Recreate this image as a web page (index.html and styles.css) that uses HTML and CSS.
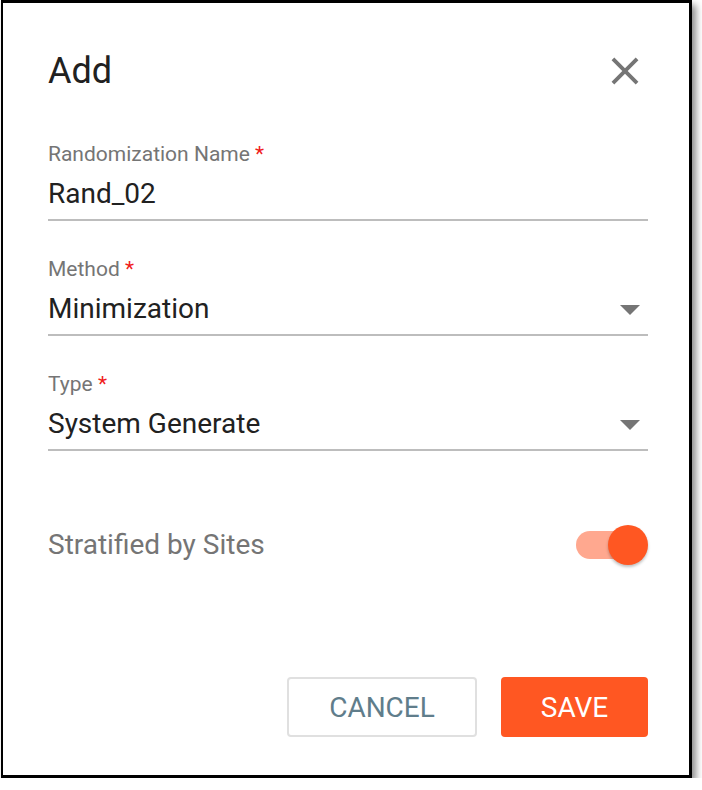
FILE: index.html
```html
<!DOCTYPE html>
<html lang="en">
<head>
<meta charset="utf-8">
<title>Add</title>
<link rel="stylesheet" href="styles.css">
</head>
<body>
<div class="dialog">
  <div class="header">
    <h1 class="title">Add</h1>
    <button class="close" aria-label="Close">
      <svg viewBox="0 0 24 24" width="46" height="46"><path fill="#757575" d="M19 6.41L17.59 5 12 10.59 6.41 5 5 6.41 10.59 12 5 17.59 6.41 19 12 13.41 17.59 19 19 17.59 13.41 12z"/></svg>
    </button>
  </div>

  <div class="field first">
    <div class="label">Randomization Name <span class="req">*</span></div>
    <div class="value">Rand_02</div>
  </div>

  <div class="field">
    <div class="label">Method <span class="req">*</span></div>
    <div class="value select">Minimization<span class="caret"></span></div>
  </div>

  <div class="field">
    <div class="label">Type <span class="req">*</span></div>
    <div class="value select">System Generate<span class="caret"></span></div>
  </div>

  <div class="toggle-row">
    <span class="toggle-label">Stratified by Sites</span>
    <span class="switch"><span class="track"></span><span class="thumb"></span></span>
  </div>

  <div class="actions">
    <button class="btn cancel">CANCEL</button>
    <button class="btn save">SAVE</button>
  </div>
</div>
</body>
</html>
```

FILE: styles.css
```css
html, body {
  margin: 0;
  padding: 0;
  background: #ffffff;
}

body {
  font-family: Roboto, "Liberation Sans", Arial, sans-serif;
  color: #212121;
}

.dialog {
  box-sizing: border-box;
  margin-left: 1px;
  width: 691px;
  height: 778px;
  border: 3px solid #000;
  border-left-width: 2px;
  background: #fff;
  box-shadow: 4px 5px 7px rgba(0, 0, 0, 0.45);
  padding: 47px 41px 38px 45px;
  display: flex;
  flex-direction: column;
}

.header {
  display: flex;
  align-items: center;
  justify-content: space-between;
  height: 42px;
}

.title {
  margin: 0;
  font-size: 36px;
  line-height: 42px;
  font-weight: 400;
  color: #212121;
}

.close {
  border: 0;
  background: none;
  padding: 0;
  width: 46px;
  height: 46px;
  display: flex;
}

.field {
  margin-top: 36px;
}

.field.first {
  margin-top: 50px;
}

.label {
  font-size: 21px;
  line-height: 24px;
  color: #757575;
}

.req {
  color: #f01c1c;
}

.value {
  position: relative;
  margin-top: 12px;
  font-size: 28px;
  line-height: 32px;
  padding-bottom: 9px;
  border-bottom: 2px solid #bdbdbd;
  color: #212121;
}

.caret {
  position: absolute;
  right: 8px;
  top: 12px;
  width: 0;
  height: 0;
  border-left: 10px solid transparent;
  border-right: 10px solid transparent;
  border-top: 10px solid #757575;
}

.toggle-row {
  margin-top: 74px;
  height: 40px;
  display: flex;
  align-items: center;
  justify-content: space-between;
}

.toggle-label {
  font-size: 28px;
  line-height: 32px;
  color: #757575;
}

.switch {
  position: relative;
  width: 72px;
  height: 40px;
}

.track {
  position: absolute;
  left: 0;
  top: 6px;
  width: 68px;
  height: 28px;
  border-radius: 14px;
  background: #ffa88f;
}

.thumb {
  position: absolute;
  right: 0;
  top: 0;
  width: 40px;
  height: 40px;
  border-radius: 50%;
  background: #ff5722;
  box-shadow: 0 2px 3px rgba(0, 0, 0, 0.25);
}

.actions {
  margin-top: auto;
  display: flex;
  justify-content: flex-end;
  gap: 24px;
}

.btn {
  height: 60px;
  font-family: Roboto, "Liberation Sans", Arial, sans-serif;
  font-size: 28px;
  font-weight: 400;
  border-radius: 4px;
  cursor: pointer;
  padding: 0;
}

.cancel {
  width: 190px;
  background: #fff;
  border: 2px solid #e0e0e0;
  color: #607d8b;
}

.save {
  width: 147px;
  background: #ff5722;
  border: 0;
  color: #fff;
}
```
